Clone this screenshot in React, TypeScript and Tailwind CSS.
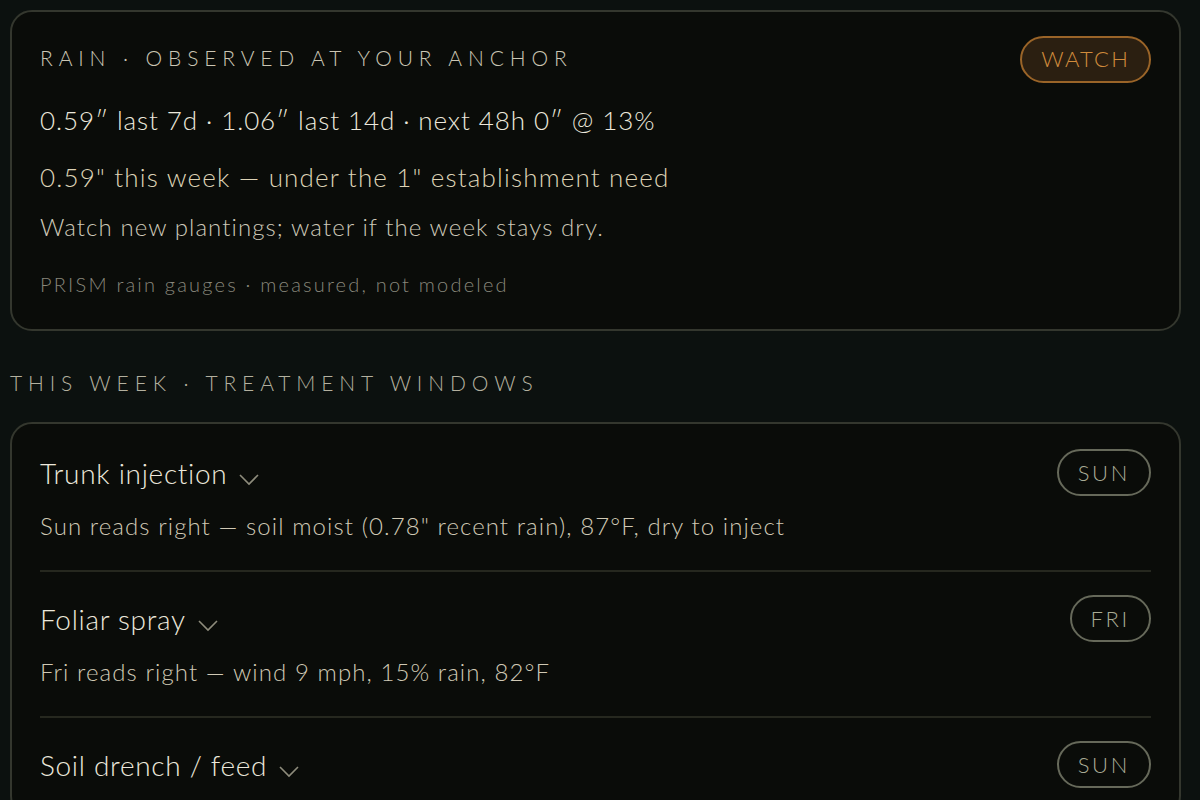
const font = { fontFamily: '"Lato", "Open Sans", sans-serif' };

type Window = { name: string; day: string; note: string };

const windows: Window[] = [
  {
    name: "Trunk injection",
    day: "SUN",
    note: 'Sun reads right — soil moist (0.78" recent rain), 87°F, dry to inject',
  },
  { name: "Foliar spray", day: "FRI", note: "Fri reads right — wind 9 mph, 15% rain, 82°F" },
  { name: "Soil drench / feed", day: "SUN", note: "" },
];

function Chevron() {
  return (
    <svg width="22" height="14" viewBox="0 0 22 14" className="ml-[11px] mt-[12px] shrink-0">
      <polyline points="2,3 11,12 20,3" fill="none" stroke="#8e8c7c" strokeWidth="1.6" />
    </svg>
  );
}

function DayPill({ day }: { day: string }) {
  return (
    <span className="flex h-[47px] items-center rounded-full border-2 border-[#66695a] px-[19px] text-[22px] font-light tracking-[0.12em] text-[#a9ab95]">
      {day}
    </span>
  );
}

export default function App() {
  return (
    <div style={font} className="min-h-screen bg-[#0c110f] pl-[10px] pr-[19px] pt-[10px] pb-10 overflow-hidden">
      <section className="rounded-[22px] border-2 border-[#34372e] bg-[#0a0c09] px-[28px] pt-[24px] pb-[32px]">
        <div className="flex items-center justify-between">
          <h2 className="-mt-[3px] text-[21px] font-light tracking-[0.28em] text-[#cbc6b4]">
            RAIN · OBSERVED AT YOUR ANCHOR
          </h2>
          <span className="flex h-[47px] items-center rounded-full border-2 border-[#9a6428] bg-[#2b1f11] px-[19px] pb-[2px] text-[22px] font-light tracking-[0.1em] text-[#d08b3c]">
            WATCH
          </span>
        </div>
        <p className="mt-[21px] text-[26px] leading-[32px] font-light tracking-[0.035em] text-[#ece8dc]">
          0.59″ last 7d · 1.06″ last 14d · next 48h 0″ @ 13%
        </p>
        <p className="mt-[25px] text-[26px] leading-[32px] font-light tracking-[0.045em] text-[#ddd3b6]">
          0.59" this week — under the 1" establishment need
        </p>
        <p className="mt-[19px] text-[24px] leading-[30px] font-light tracking-[0.045em] text-[#cdc8b8]">
          Watch new plantings; water if the week stays dry.
        </p>
        <p className="mt-[29px] text-[20px] leading-[26px] font-light tracking-[0.11em] text-[#88877b]">
          PRISM rain gauges · measured, not modeled
        </p>
      </section>

      <h3 className="mt-[38px] text-[21px] leading-[28px] font-light tracking-[0.28em] text-[#b3b09f]">
        THIS WEEK · TREATMENT WINDOWS
      </h3>

      <section className="mt-[25px] rounded-[22px] border-2 border-[#34372e] bg-[#0a0c09] px-[28px] pt-[2px]">
        {windows.map((w, i) => (
          <div
            key={i}
            className={`pt-[23px] pb-[28px] ${i < windows.length - 1 ? "border-b-2 border-[#26281f]" : ""}`}
          >
            <div className="flex items-center justify-between">
              <div className="flex items-center text-[28px] leading-[36px] font-light tracking-[0.025em] text-[#ece8dc]">
                {w.name}
                <Chevron />
              </div>
              <DayPill day={w.day} />
            </div>
            {w.note && (
              <p className="mt-[14px] text-[24px] leading-[32px] font-light tracking-[0.045em] text-[#d0c9b5]">
                {w.note}
              </p>
            )}
          </div>
        ))}
      </section>
    </div>
  );
}
